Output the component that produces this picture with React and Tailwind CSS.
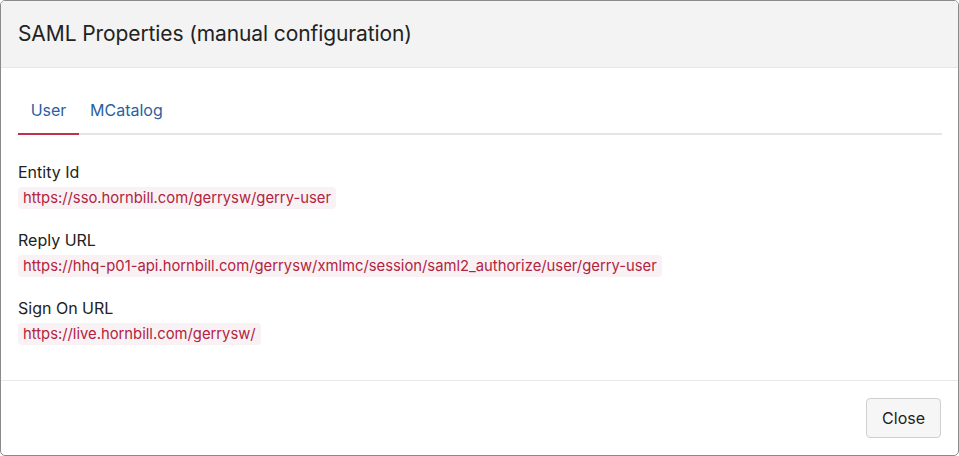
const fields = [
  { label: "Entity Id", value: "https://sso.hornbill.com/gerrysw/gerry-user" },
  {
    label: "Reply URL",
    value:
      "https://hhq-p01-api.hornbill.com/gerrysw/xmlmc/session/saml2_authorize/user/gerry-user",
  },
  { label: "Sign On URL", value: "https://live.hornbill.com/gerrysw/" },
];

const App = () => {
  return (
    <div className="h-[456px] w-[959px] bg-white font-['Inter','Liberation_Sans',sans-serif] text-[#333]">
      <div className="h-full flex flex-col border border-[#8a8a8a] rounded-[5px] overflow-hidden">
        {/* Header */}
        <header className="h-[67px] shrink-0 bg-[#f3f3f3] border-b border-[#e6e6e6] px-[17px] flex items-center">
          <h1 className="text-[21px] text-[#222] tracking-[-0.1px]">
            SAML Properties (manual configuration)
          </h1>
        </header>

        {/* Body */}
        <main className="flex-1 px-[17px] pt-[21px]">
          <nav className="flex border-b-2 border-[#e3e5e8] w-[924px]">
            <div className="w-[61px] -mb-[2px] border-b-2 border-[#c4304c] pt-[9px] pb-[11px] text-center text-[16px] text-[#2c5fa0]">
              User
            </div>
            <div className="px-[11px] pt-[9px] pb-[11px] text-[16px] text-[#2c5fa0]">
              MCatalog
            </div>
          </nav>

          <div className="pt-[27px] flex flex-col gap-[21px]">
            {fields.map((f) => (
              <div key={f.label} className="flex flex-col items-start">
                <div className="text-[16px] leading-[20px] text-[#222]">{f.label}</div>
                <code className="mt-[5px] font-['Inter','Liberation_Sans',sans-serif] text-[14.8px] leading-[20px] text-[#b3233f] bg-[#f8f2f4] rounded-[4px] px-[5px] py-[1px]">
                  {f.value}
                </code>
              </div>
            ))}
          </div>
        </main>

        {/* Footer */}
        <footer className="h-[75px] shrink-0 border-t border-[#e8e8e8] px-[17px] flex items-center justify-end">
          <button className="h-[40px] px-[15px] rounded-[4px] border border-[#cfcfcf] bg-[#f6f6f6] text-[16px] text-[#222]">
            Close
          </button>
        </footer>
      </div>
    </div>
  );
};

export default App;
